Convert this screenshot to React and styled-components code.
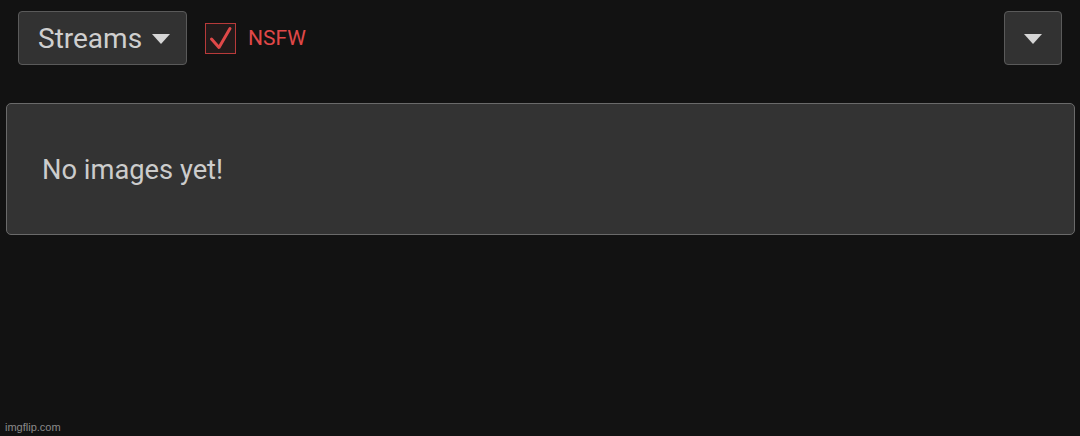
import React from 'react';
import styled, { createGlobalStyle } from 'styled-components';

const GlobalStyle = createGlobalStyle`
  html, body {
    margin: 0;
    padding: 0;
    background: #121212;
    font-family: Roboto, 'Liberation Sans', sans-serif;
  }
`;

const Page = styled.div`
  position: relative;
  width: 1080px;
  height: 436px;
  box-sizing: border-box;
  padding: 11px 5px 0 6px;
  background: #121212;
`;

const Toolbar = styled.div`
  display: flex;
  align-items: center;
  padding: 0 13px 0 12px;
  height: 54px;
`;

const DropButton = styled.button`
  display: flex;
  align-items: center;
  justify-content: center;
  gap: 10px;
  box-sizing: border-box;
  height: 54px;
  width: ${props => props.width || 'auto'};
  padding: ${props => props.padding || '0'};
  background: #323232;
  border: 1px solid #5a5a5a;
  border-radius: 4px;
  color: #cfcfcf;
  font-family: Roboto, 'Liberation Sans', sans-serif;
  font-size: 28px;
  cursor: pointer;
`;

const Caret = styled.span`
  width: 0;
  height: 0;
  border-left: 9px solid transparent;
  border-right: 9px solid transparent;
  border-top: 10px solid #d6d6d6;
  margin-top: 2px;
`;

const CheckLabel = styled.label`
  display: flex;
  align-items: center;
  gap: 12px;
  margin-left: 18px;
  color: #e04848;
  font-size: 21px;
  cursor: pointer;
`;

const CheckBox = styled.span`
  display: flex;
  box-sizing: border-box;
  width: 31px;
  height: 31px;
  border: 1px solid #b83a3a;
  background: #221a1a;
`;

const Spacer = styled.div`
  flex: 1;
`;

const Panel = styled.div`
  box-sizing: border-box;
  margin-top: 38px;
  height: 132px;
  display: flex;
  align-items: center;
  padding: 2px 0 0 35px;
  background: #333333;
  border: 1px solid #6a6a6a;
  border-radius: 5px;
  color: #cccccc;
  font-size: 27.3px;
`;

const Watermark = styled.span`
  position: absolute;
  left: 5px;
  bottom: 3px;
  font-family: 'Liberation Sans', Arial, sans-serif;
  font-size: 11px;
  color: #8a8a8a;
`;

const Check = () => (
  <svg width="29" height="29" viewBox="0 0 29 29">
    <path d="M5.5 15 L13 23.5 L24 4.5" fill="none" stroke="#e04848" strokeWidth="3" strokeLinecap="round" strokeLinejoin="round" />
  </svg>
);

export default function App() {
  return (
    <Page>
      <GlobalStyle />
      <Toolbar>
        <DropButton padding="0 16px 0 19px">
          Streams
          <Caret />
        </DropButton>
        <CheckLabel>
          <CheckBox>
            <Check />
          </CheckBox>
          NSFW
        </CheckLabel>
        <Spacer />
        <DropButton width="58px">
          <Caret />
        </DropButton>
      </Toolbar>
      <Panel>No images yet!</Panel>
      <Watermark>imgflip.com</Watermark>
    </Page>
  );
}
